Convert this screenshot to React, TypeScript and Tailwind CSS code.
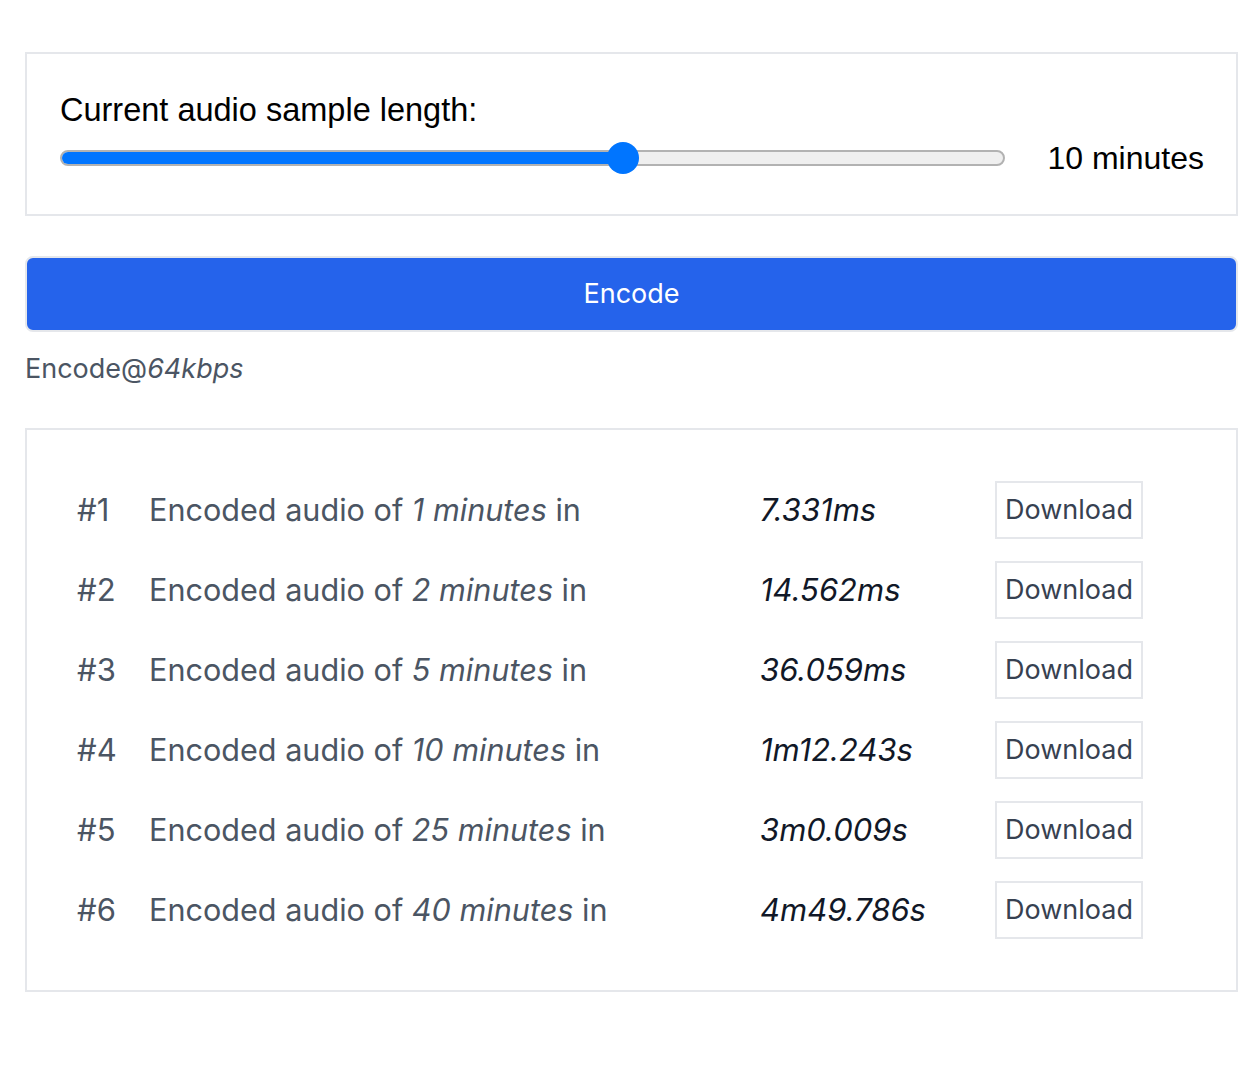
import React from "react";

const results = [
  { n: 1, minutes: 1, time: "7.331ms" },
  { n: 2, minutes: 2, time: "14.562ms" },
  { n: 3, minutes: 5, time: "36.059ms" },
  { n: 4, minutes: 10, time: "1m12.243s" },
  { n: 5, minutes: 25, time: "3m0.009s" },
  { n: 6, minutes: 40, time: "4m49.786s" },
];

function Slider({ value }: { value: number }) {
  return (
    <div className="relative flex-1 h-[32px] flex items-center">
      <div className="w-full h-[16px] rounded-full bg-[#efefef] border-2 border-[#b2b2b2] overflow-hidden">
        <div className="h-full bg-[#0075ff]" style={{ width: `${value}%` }} />
      </div>
      <div
        className="absolute top-0 w-[32px] h-[32px] rounded-full bg-[#0075ff]"
        style={{ left: `calc(${value}% - 16px)` }}
      />
    </div>
  );
}

export default function App() {
  return (
    <div className="bg-white pl-[25px] pr-[20px] pt-[52px] pb-[80px] font-['Inter',sans-serif]">
      {/* Sample length panel */}
      <div className="border-2 border-[#e5e7eb] pl-[33px] pr-[32px] py-8">
        <p className="font-['Liberation_Sans',Arial,sans-serif] text-[32.5px] leading-[48px] text-black">
          Current audio sample length:
        </p>
        <div className="flex items-center gap-[42px] h-[48px]">
          <Slider value={59.6} />
          <span className="font-['Liberation_Sans',Arial,sans-serif] text-[32px] leading-[48px] text-black">
            10 minutes
          </span>
        </div>
      </div>

      {/* Encode button */}
      <button className="mt-[40px] w-full h-[76px] rounded-[8px] bg-[#2563eb] border-2 border-[#e5e7eb] text-white text-[27px]">
        Encode
      </button>

      <p className="mt-[17px] text-[27px] leading-[40px] text-[#4b5563]">
        Encode@<em>64kbps</em>
      </p>

      {/* Results */}
      <div className="mt-[39px] border-2 border-[#e5e7eb] pl-[50px] py-[40px]">
        {results.map((r) => (
          <div
            key={r.n}
            className="grid grid-cols-[72px_611px_235px_148px] items-center h-[80px] text-[31px] text-[#4b5563]"
          >
            <span>#{r.n}</span>
            <span className="text-[30.6px]">
              Encoded audio of <em>{r.minutes} minutes</em> in
            </span>
            <em className="text-[#111827]">{r.time}</em>
            <button className="h-[58px] border-2 border-[#e5e7eb] text-[27px] text-[#374151]">
              Download
            </button>
          </div>
        ))}
      </div>
    </div>
  );
}
